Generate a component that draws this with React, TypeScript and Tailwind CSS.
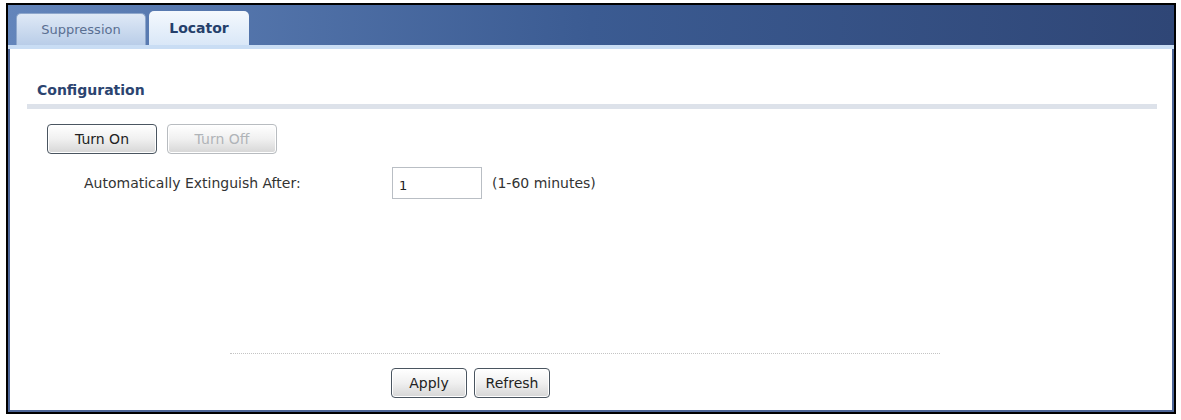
const font = { fontFamily: '"DejaVu Sans", Verdana, sans-serif' };

function Btn({ label, disabled, w }: { label: string; disabled?: boolean; w: string }) {
  return (
    <button
      className={
        "h-[30px] rounded-[4px] border text-[14px] leading-[16px] bg-gradient-to-b from-white via-[#f0f0f0] to-[#d6d6d6] shadow-[inset_0_0_0_1px_#ffffff] " +
        w +
        (disabled ? " border-[#b8bcc0] text-[#b0b4b8]" : " border-[#4a5560] text-[#222]")
      }
    >
      {label}
    </button>
  );
}

export default function App() {
  return (
    <div className="w-[1181px] h-[420px] bg-white relative overflow-hidden" style={font}>
      <div className="ml-[6px] mt-[3px] w-[1170px] h-[411px] border-[2px] border-black bg-[#4d6597] flex flex-col">
        {/* tab bar */}
        <div className="h-[40px] flex items-end pl-[8px] gap-[3px] bg-gradient-to-r from-[#6385bb] via-[#3b5b92] to-[#2f4676]">
          <div className="w-[130px] h-[32px] rounded-t-[5px] bg-gradient-to-b from-[#dfe9f6] to-[#b9cde8] border border-[#8ea7cc] border-b-0 flex items-center justify-center text-[13px] text-[#5a6f92]">
            Suppression
          </div>
          <div className="w-[100px] h-[37px] -mb-[3px] rounded-t-[5px] bg-gradient-to-b from-[#f4f8fd] to-[#d7e6f7] flex items-center justify-center text-[14px] font-bold text-[#253f6b] pb-[2px]">
            Locator
          </div>
        </div>
        <div className="h-[4px] bg-[#c9ddf4]" />
        {/* body */}
        <div className="flex-1 ml-[2px] mr-[2px] mb-[2px] bg-white flex flex-col">
          <div className="pl-[27px] pt-[33px] text-[14px] leading-[16px] font-bold text-[#2b4470]">Configuration</div>
          <div className="mt-[6px] ml-[17px] mr-[15px] h-[5px] bg-[#dde2ea]" />
          <div className="flex gap-[10px] ml-[37px] mt-[15px]">
            <Btn label="Turn On" w="w-[110px]" />
            <Btn label="Turn Off" w="w-[110px]" disabled />
          </div>
          <div className="flex items-center mt-[13px] text-[14px] leading-[16px] text-[#333]">
            <div className="w-[382px] pl-[74px]">Automatically Extinguish After:</div>
            <input
              defaultValue="1"
              className="w-[90px] h-[32px] border border-[#b9bec4] px-[6px] pt-[4px] text-[13px] text-[#222] outline-none"
              style={font}
            />
            <span className="ml-[10px]">(1-60 minutes)</span>
          </div>
          <div className="flex-1" />
          <div className="ml-[220px] w-[710px] border-t border-dotted border-[#c4c4c4]" />
          <div className="flex gap-[7px] ml-[381px] mt-[14px] mb-[12px]">
            <Btn label="Apply" w="w-[76px]" />
            <Btn label="Refresh" w="w-[76px]" />
          </div>
        </div>
      </div>
    </div>
  );
}
